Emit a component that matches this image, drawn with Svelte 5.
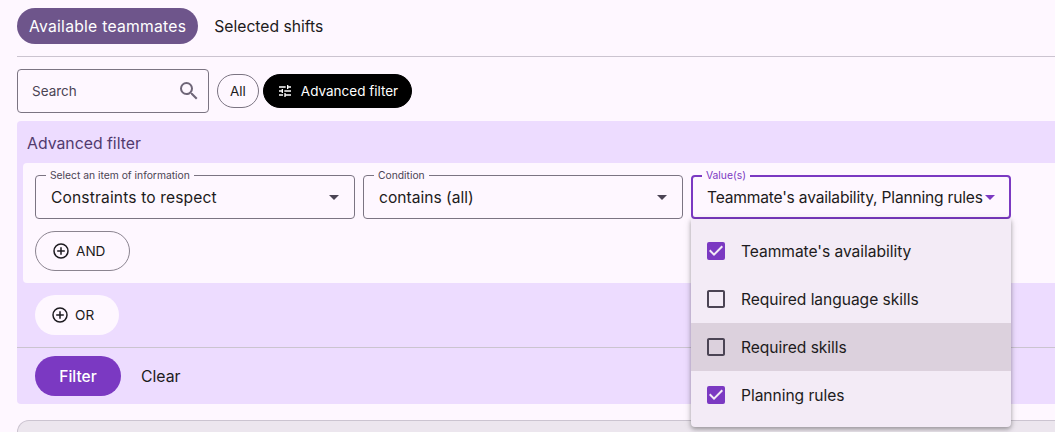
<script lang="ts">
  const options = [
    { label: "Teammate's availability", checked: true, hovered: false },
    { label: "Required language skills", checked: false, hovered: false },
    { label: "Required skills", checked: false, hovered: true },
    { label: "Planning rules", checked: true, hovered: false }
  ];
</script>

{#snippet caret()}
  <svg class="caret" width="24" height="24" viewBox="0 0 24 24"><path d="M7 10l5 5 5-5z" fill="currentColor" /></svg>
{/snippet}

{#snippet plus()}
  <svg width="18" height="18" viewBox="0 0 18 18" fill="none" stroke="currentColor" stroke-width="1.5"><circle cx="9" cy="9" r="7" /><path d="M9 5.2v7.6M5.2 9h7.6" /></svg>
{/snippet}

<main class="page">
  <nav class="tabs">
    <span class="tab active">Available teammates</span>
    <span class="tab">Selected shifts</span>
  </nav>

  <section class="toolbar">
    <label class="search">
      <span>Search</span>
      <svg width="24" height="24" viewBox="0 0 24 24"><path fill="#6f6678" d="M15.5 14h-.79l-.28-.27A6.47 6.47 0 0 0 16 9.5 6.5 6.5 0 1 0 9.5 16c1.61 0 3.09-.59 4.23-1.57l.27.28v.79l5 4.99L20.49 19l-4.99-5zm-6 0C7.01 14 5 11.99 5 9.5S7.01 5 9.5 5 14 7.01 14 9.5 11.99 14 9.5 14z" /></svg>
    </label>
    <button class="chip">All</button>
    <button class="chip dark">
      <svg width="16" height="16" viewBox="0 0 24 24"><path fill="currentColor" d="M3 17v2h6v-2H3zM3 5v2h10V5H3zm10 16v-2h8v-2h-8v-2h-2v6h2zM7 9v2H3v2h4v2h2V9H7zm14 4v-2H11v2h10zm-6-4h2V7h4V5h-4V3h-2v6z" /></svg>
      Advanced filter
    </button>
  </section>

  <section class="panel">
    <h2>Advanced filter</h2>
    <div class="group">
      <div class="fields">
        <div class="field">
          <span class="legend">Select an item of information</span>
          <span class="value wide">Constraints to respect</span>
          {@render caret()}
        </div>
        <div class="field">
          <span class="legend">Condition</span>
          <span class="value">contains (all)</span>
          {@render caret()}
        </div>
        <div class="field focused">
          <span class="legend">Value(s)</span>
          <span class="value">Teammate's availability, Planning rules</span>
          {@render caret()}
          <ul class="menu">
            {#each options as option}
              <li class:hovered={option.hovered}>
                {#if option.checked}
                  <svg width="24" height="24" viewBox="0 0 24 24"><path fill="#7b39c2" d="M19 3H5a2 2 0 0 0-2 2v14a2 2 0 0 0 2 2h14a2 2 0 0 0 2-2V5a2 2 0 0 0-2-2zm-9 14l-5-5 1.41-1.41L10 14.17l7.59-7.59L19 8l-9 9z" /></svg>
                {:else}
                  <svg width="24" height="24" viewBox="0 0 24 24"><path fill="#4b4454" d="M19 5v14H5V5h14m0-2H5c-1.1 0-2 .9-2 2v14c0 1.1.9 2 2 2h14c1.1 0 2-.9 2-2V5c0-1.1-.9-2-2-2z" /></svg>
                {/if}
                <span>{option.label}</span>
              </li>
            {/each}
          </ul>
        </div>
      </div>
      <button class="logic and">{@render plus()} AND</button>
    </div>
    <div class="or-row">
      <button class="logic or">{@render plus()} OR</button>
    </div>
    <footer class="actions">
      <button class="filter">Filter</button>
      <button class="clear">Clear</button>
    </footer>
  </section>

  <div class="results"></div>
</main>

<style>
  :global(body) { margin: 0; background: #fef7ff; overflow: hidden; }
  .page { width: 1055px; height: 432px; overflow: hidden; box-sizing: border-box; padding: 8px 0 0 17px; background: #fef7ff; color: #1d1b20; font-family: "Inter", "Open Sans", sans-serif; font-size: 15px; }
  button { font: inherit; color: inherit; background: none; border: 0; padding: 0; }

  .tabs { display: flex; gap: 4px; height: 49px; box-sizing: border-box; border-bottom: 1px solid #cbc4d0; align-items: flex-start; }
  .tab { height: 36px; display: flex; align-items: center; padding: 0 12px; border-radius: 18px; font-size: 15.7px; }
  .tab.active { background: #6e558b; color: #fff; letter-spacing: .25px; }

  .toolbar { display: flex; align-items: center; gap: 4px; margin-top: 12px; }
  .search { width: 192px; height: 44px; box-sizing: border-box; display: flex; align-items: center; justify-content: space-between; padding: 0 7px 0 14px; margin-right: 4px; border: 1px solid #7b7482; border-radius: 4px; color: #4b4454; font-size: 13.5px; }
  .chip { height: 34px; padding: 0 12px; border: 1px solid #7b7482; border-radius: 17px; font-size: 13.5px; display: flex; align-items: center; gap: 8px; box-sizing: border-box; }
  .chip.dark { background: #000; border-color: #000; color: #fff; padding: 0 12.5px 0 13px; }

  .panel { width: 1100px; margin-top: 8px; background: #eddcff; border-radius: 4px; height: 283px; box-sizing: border-box; }
  h2 { margin: 0; padding: 0 10px; height: 42px; line-height: 45px; font-size: 15.8px; font-weight: 400; color: #523a6e; }
  .group { margin-left: 6px; height: 120px; box-sizing: border-box; padding: 12px; background: #fef7ff; border-radius: 4px 0 0 4px; }
  .fields { display: flex; gap: 8px; }
  .field { position: relative; width: 320px; height: 44px; box-sizing: border-box; display: flex; align-items: center; padding: 0 8px 0 15px; border: 1px solid #7b7482; border-radius: 4px; font-size: 15.6px; }
  .value { flex: 1; white-space: nowrap; margin-top: 1px; }
  .value.wide { letter-spacing: .14px; }
  .legend { position: absolute; left: 10px; top: -7px; padding: 0 4px; background: #fef7ff; font-size: 10.3px; line-height: 12px; color: #4b4454; white-space: nowrap; }
  .caret { color: #4b4454; flex: none; }
  .field.focused { border: 2px solid #7b39c2; padding: 0 7px 0 14px; }
  .focused .value { letter-spacing: -.2px; }
  .focused .legend { color: #7b39c2; left: 9px; top: -8px; }
  .focused .caret { color: #7b39c2; margin-left: -9px; }
  .menu { position: absolute; z-index: 2; left: -2px; top: 42px; width: 320px; margin: 0; padding: 8px 0; box-sizing: border-box; list-style: none; background: #f3ebf6; border-radius: 0 0 4px 4px; box-shadow: 0 2px 4px rgba(0,0,0,.3), 0 1px 8px rgba(0,0,0,.12); }
  .menu li { height: 48px; display: flex; align-items: center; gap: 13px; padding: 0 13px; font-size: 15.6px; letter-spacing: -.05px; }
  .menu li.hovered { background: #dcd1dd; }

  .logic { display: flex; align-items: center; gap: 6px; height: 40px; border-radius: 20px; font-size: 13.6px; box-sizing: border-box; }
  .logic.and { width: 95px; margin-top: 12px; padding-left: 16px; border: 1px solid #8b8490; }
  .or-row { height: 65px; padding: 12px 0 0 18px; box-sizing: border-box; border-bottom: 1px solid #cbc4d0; }
  .logic.or { width: 84px; padding-left: 16px; background: #fef7ff; }
  .actions { display: flex; align-items: center; gap: 20px; padding: 8px 18px; }
  .filter { width: 86px; height: 40px; border-radius: 20px; background: #7b39c2; color: #fff; font-weight: 500; font-size: 15.5px; }
  .clear { font-size: 15.8px; }

  .results { width: 1100px; height: 60px; margin-top: 16px; box-sizing: border-box; background: #ece6ee; border: 1px solid #cbc4d0; border-bottom: 0; border-radius: 12px 0 0 0; }
</style>
